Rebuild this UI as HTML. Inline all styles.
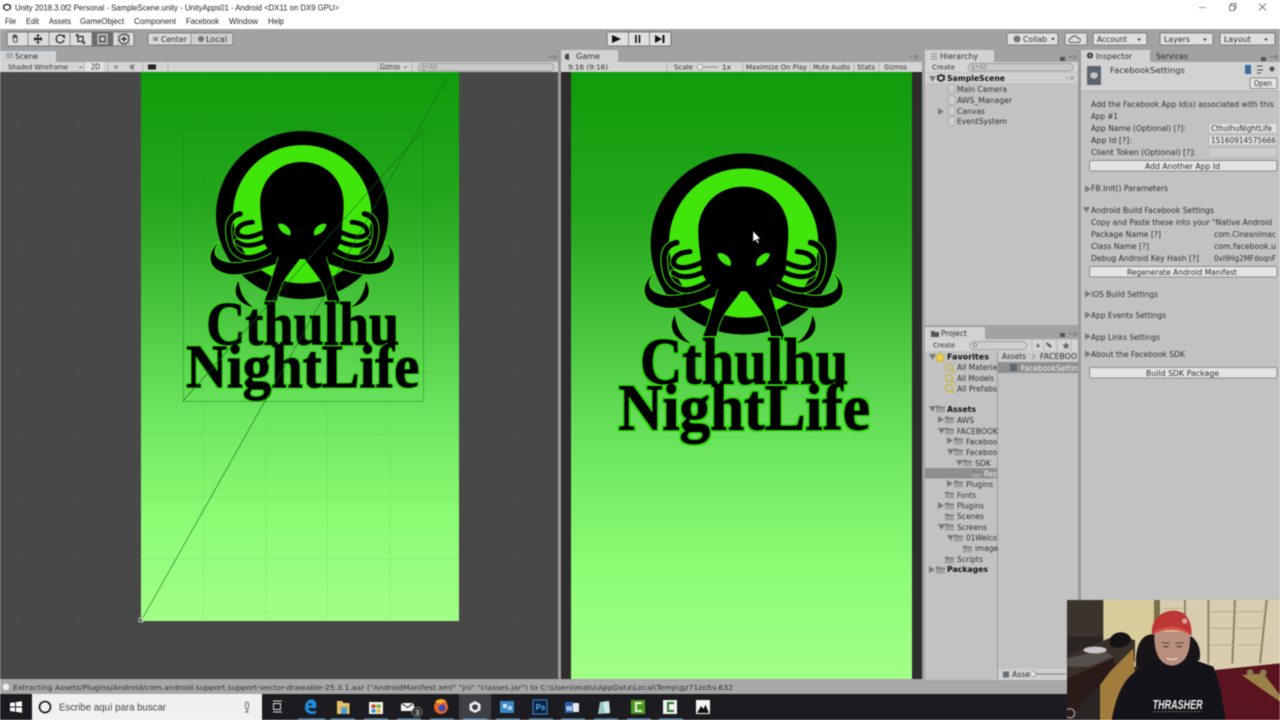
<!DOCTYPE html>
<html><head><meta charset="utf-8"><style>
html,body{margin:0;padding:0;background:#fff;width:1280px;height:720px;overflow:hidden}
#r{display:block;filter:blur(.42px)}
text{font-family:"DejaVu Sans","Liberation Sans",sans-serif;font-size:7.5px;fill:#303030}
.b{font-weight:bold;fill:#111}
.w{fill:#f2f2f2}
.m{font-family:"Liberation Sans",sans-serif;font-size:8.5px;fill:#222}
.btn{fill:#e4e4e4;stroke:#777;stroke-width:.8}
.tb{fill:#dedede;stroke:#6a6a6a;stroke-width:.8}
.arr{fill:#7a7a7a}
.lt{font-family:"Liberation Serif",serif;font-weight:bold;font-size:198px;fill:#000;stroke:#000;stroke-width:3px}
</style></head><body>
<svg id="r" width="1280" height="720" viewBox="0 0 1280 720" xmlns="http://www.w3.org/2000/svg">
<defs>
<linearGradient id="g" x1="0" y1="0" x2="0" y2="1"><stop offset="0" stop-color="#0f9c0a"/><stop offset=".25" stop-color="#27a81e"/><stop offset=".62" stop-color="#6de65f"/><stop offset=".82" stop-color="#8dfd75"/><stop offset="1" stop-color="#a2ff88"/></linearGradient>
<filter id="gl" x="-5%" y="-10%" width="110%" height="120%"><feMorphology in="SourceAlpha" operator="dilate" radius="4" result="d"/><feFlood flood-color="#2fd60c"/><feComposite in2="d" operator="in" result="o"/><feMerge><feMergeNode in="o"/><feMergeNode in="SourceGraphic"/></feMerge></filter>
<g id="half">
<path d="M135 397C98 425 92 468 128 490C170 515 228 502 280 482L350 458L335 424C292 432 250 455 210 465C170 472 130 462 120 442C113 425 122 408 135 397Z" fill="#000" stroke="#3ee60a" stroke-width="6" paint-order="stroke"/>
<path d="M200 308C165 315 158 345 165 385C170 415 180 440 220 450C250 452 285 435 310 415" fill="none" stroke="#3ee60a" stroke-width="23" stroke-linecap="round"/>
<path d="M200 308C165 315 158 345 165 385C170 415 180 440 220 450C250 452 285 435 310 415" fill="none" stroke="#000" stroke-width="17" stroke-linecap="round"/>
<path d="M240 335C205 338 190 350 190 370C205 392 245 385 300 355" fill="none" stroke="#3ee60a" stroke-width="21" stroke-linecap="round"/>
<path d="M240 335C205 338 190 350 190 370C205 392 245 385 300 355" fill="none" stroke="#000" stroke-width="15" stroke-linecap="round"/>
<path d="M190 398C215 418 250 413 305 385" fill="none" stroke="#3ee60a" stroke-width="21" stroke-linecap="round"/>
<path d="M190 398C215 418 250 413 305 385" fill="none" stroke="#000" stroke-width="15" stroke-linecap="round"/>
<path d="M325 445C312 490 300 525 292 555L276 598L316 602C322 575 325 555 338 530C352 505 375 480 394 452Z" fill="#000" stroke="#3ee60a" stroke-width="5" paint-order="stroke"/>
<path d="M195 525C172 565 192 598 242 610C215 590 200 565 195 525Z" fill="#000" stroke="#3ee60a" stroke-width="4" paint-order="stroke"/>
</g>
<g id="logo">
<ellipse cx="401" cy="312" rx="279" ry="272" fill="#000"/>
<circle cx="401" cy="309" r="224" fill="#40e60a"/>
<use href="#half"/>
<use href="#half" transform="translate(802 0) scale(-1 1)"/>
<path d="M400 140C480 140 535 200 535 275C535 325 528 350 528 385C522 425 490 448 460 452L400 454L342 452C312 448 280 425 274 385C274 350 265 325 265 275C265 200 320 140 400 140Z" fill="#000"/>
<path d="M342 342C362 352 366 368 362 378C344 376 326 362 322 342C328 338 336 339 342 342Z" fill="#3ee60a"/>
<path d="M460 342C440 352 436 368 440 378C458 376 476 362 480 342C474 338 466 339 460 342Z" fill="#3ee60a"/>
<g filter="url(#gl)">
<text class="lt" x="90" y="730" textLength="625" lengthAdjust="spacingAndGlyphs">Cthulhu</text>
<text class="lt" x="25" y="869" textLength="755" lengthAdjust="spacingAndGlyphs">NightLife</text>
</g>
</g>
<g id="fd"><path d="M0 1.500h3l1 1h5v6h-9z" fill="#7e7e7e"/><path d="M0 4h9v4.500h-9z" fill="#a0a0a0"/></g>
<g id="sh"><path d="M0 1l4-1 4 1v4c0 3-2 4.500-4 6-2-1.500-4-3-4-6z" fill="#cdcdcd" stroke="#999" stroke-width=".6"/></g>
<path id="ad" d="M0 0h7l-3.500 6z" fill="#7a7a7a"/>
<path id="ar" d="M0 0l6 3.500-6 3.500z" fill="#7a7a7a"/>
<g id="mg"><circle cx="4" cy="4" r="3.500" fill="none" stroke="#c8b73a" stroke-width="1.300"/><path d="M6.500 6.500l3 3" stroke="#c8b73a" stroke-width="1.500"/></g>
<clipPath id="cam"><rect x="1067" y="600" width="213" height="120"/></clipPath>
</defs>

<!-- title + menu -->
<rect width="1280" height="29" fill="#fff"/>
<path d="M7 3.500l4 1.500v4l-4 2-4-2v-4z" fill="#333"/><path d="M7 5l2.500 1v2.500l-2.500 1.200-2.500-1.200v-2.500z" fill="#fff"/>
<text class="m" x="15" y="10.500" textLength="324" lengthAdjust="spacingAndGlyphs">Unity 2018.3.0f2 Personal - SampleScene.unity - UnityApps01 - Android &lt;DX11 on DX9 GPU&gt;</text>
<text class="m" x="5" y="24" textLength="11" lengthAdjust="spacingAndGlyphs">File</text>
<text class="m" x="26" y="24" textLength="13" lengthAdjust="spacingAndGlyphs">Edit</text>
<text class="m" x="49" y="24" textLength="22" lengthAdjust="spacingAndGlyphs">Assets</text>
<text class="m" x="80" y="24" textLength="44" lengthAdjust="spacingAndGlyphs">GameObject</text>
<text class="m" x="134" y="24" textLength="42" lengthAdjust="spacingAndGlyphs">Component</text>
<text class="m" x="186" y="24" textLength="33" lengthAdjust="spacingAndGlyphs">Facebook</text>
<text class="m" x="229" y="24" textLength="29" lengthAdjust="spacingAndGlyphs">Window</text>
<text class="m" x="268" y="24" textLength="16" lengthAdjust="spacingAndGlyphs">Help</text>
<path d="M1199 7.500h7" stroke="#999" stroke-width="1"/>
<path d="M1229.500 5.500h5v5h-5zM1231 5.500v-2h5v5h-1.500" fill="none" stroke="#555" stroke-width=".8"/>
<path d="M1259 3.500l7 7M1266 3.500l-7 7" stroke="#555" stroke-width=".8"/>

<!-- main toolbar -->
<rect y="29" width="1280" height="651" fill="#a2a2a2"/>
<rect x="7" y="32" width="127" height="14" rx="2" fill="#dcdcdc" stroke="#5f5f5f" stroke-width=".8"/>
<rect x="92" y="32" width="21" height="14" fill="#6d6d6d"/>
<path d="M28 32v14M49 32v14M70 32v14M92 32v14M113 32v14" stroke="#6a6a6a" stroke-width=".7"/>
<path d="M13 39v-3h1v2-3h1v3-3h1v3-2h1v6h-3z" fill="none" stroke="#333" stroke-width=".8"/>
<path d="M38 34l2 2h-1.500v2h2v-1.500l2 2.500-2 2.500v-1.500h-2v2h1.500l-2 2-2-2h1.500v-2h-2v1.500l-2-2.500 2-2.500v1.500h2v-2h-1.500z" fill="#222"/>
<path d="M63 36a4 4 0 1 0 1 4" fill="none" stroke="#333" stroke-width="1.300"/><path d="M61 35h4v4z" fill="#333"/>
<rect x="78" y="36.500" width="5" height="5" fill="none" stroke="#222" stroke-width="1.200"/><path d="M76 34l3 0-3 3zM85 44l-3 0 3-3z" fill="#222"/>
<rect x="98" y="34.500" width="9" height="9" fill="none" stroke="#e8e8e8" stroke-width="1"/><rect x="101" y="37.500" width="3" height="3" fill="#ddd"/>
<circle cx="124" cy="39" r="5" fill="none" stroke="#333" stroke-width="1"/><path d="M124 36v6M121 39h6" stroke="#222" stroke-width="1.200"/><rect x="118" y="33.500" width="11" height="11" fill="none" stroke="#444" stroke-width=".6" stroke-dasharray="2 2"/>
<rect x="148" y="33" width="85" height="12" rx="2" fill="#d8d8d8" stroke="#6a6a6a" stroke-width=".8"/><rect x="191" y="33" width="42" height="12" fill="#cdcdcd" stroke="#6a6a6a" stroke-width=".6"/>
<path d="M153 38h5M153 40h5" stroke="#555"/>
<circle cx="201" cy="39" r="3" fill="#777"/>
<text x="161" y="42" textLength="26" lengthAdjust="spacingAndGlyphs">Center</text>
<text x="206" y="42" textLength="21" lengthAdjust="spacingAndGlyphs">Local</text>
<rect x="607" y="32" width="64" height="14" rx="2" fill="#e0e0e0" stroke="#5f5f5f" stroke-width=".8"/>
<path d="M628.500 32v14M649.500 32v14" stroke="#6a6a6a" stroke-width=".7"/>
<path d="M612 35l9 4-9 4z" fill="#111"/>
<path d="M635 35h1.800v8H635zM638.500 35h1.800v8h-1.800z" fill="#222"/>
<path d="M655 35l7 4-7 4zM662.500 35h2v8h-2z" fill="#111"/>
<rect x="1007" y="33" width="51" height="12" rx="2" class="tb"/>
<circle cx="1017" cy="39" r="3.500" fill="#777"/>
<text x="1023" y="42" textLength="24" lengthAdjust="spacingAndGlyphs">Collab</text><path d="M1051 38h4l-2 2.500z" fill="#444"/>
<rect x="1065" y="33" width="22" height="12" rx="2" class="tb"/>
<path d="M1071 42.500a2 2 0 0 1 0-4 3.500 3.500 0 0 1 6.500-.500 2.300 2.300 0 0 1 1 4.500z" fill="none" stroke="#333" stroke-width=".8"/>
<rect x="1093" y="33" width="54" height="12" rx="2" class="tb"/>
<text x="1097" y="42" textLength="30" lengthAdjust="spacingAndGlyphs">Account</text><path d="M1137 38.500h4l-2 2.500z" fill="#444"/>
<rect x="1160" y="33" width="53" height="12" rx="2" class="tb"/>
<text x="1164" y="42" textLength="26" lengthAdjust="spacingAndGlyphs">Layers</text><path d="M1203 38.500h4l-2 2.500z" fill="#444"/>
<rect x="1220" y="33" width="55" height="12" rx="2" class="tb"/>
<text x="1224" y="42" textLength="27" lengthAdjust="spacingAndGlyphs">Layout</text><path d="M1264 38.500h4l-2 2.500z" fill="#444"/>

<!-- Scene -->
<rect x="0" y="50" width="56" height="13" fill="#d2d2d2"/><rect x="0" y="50" width="56" height="1" fill="#7fa0cc"/>
<path d="M6 53.500h7M6 55.500h7M6 57.500h7" stroke="#777" stroke-width=".8"/>
<text x="15" y="59" textLength="23" lengthAdjust="spacingAndGlyphs">Scene</text>
<path d="M549 57h3M553 56h4M553 58h4" stroke="#666" stroke-width=".8"/>
<rect x="0" y="62" width="558" height="10" fill="#d4d4d4"/>
<text x="8" y="69.500" textLength="60" lengthAdjust="spacingAndGlyphs" style="font-size:7px">Shaded Wireframe</text>
<path d="M79 66.500h3l-1.500 2z" fill="#666"/><path d="M84 62v10M104 62v10M108 62v10M143 62v10M168 62v10M378 62v10M412 62v10" stroke="#aaa" stroke-width=".7"/>
<rect x="85" y="62" width="19" height="10" fill="#e2e2e2"/>
<text x="91" y="69.500" textLength="9" lengthAdjust="spacingAndGlyphs">2D</text>
<circle cx="116" cy="67" r="2" fill="#999"/><path d="M130 65h2l2-1.500v7l-2-1.500h-2z" fill="#888"/><rect x="148" y="64.500" width="8" height="5" fill="#222"/>
<text x="380" y="69.500" textLength="20" lengthAdjust="spacingAndGlyphs">Gizmos</text><path d="M404 66.500h3l-1.500 2z" fill="#666"/>
<rect x="418" y="63.500" width="136" height="7.500" rx="3.700" fill="#c9c9c9" stroke="#8d8d8d" stroke-width=".7"/>
<text x="421" y="69.500" style="fill:#888" textLength="16" lengthAdjust="spacingAndGlyphs">q•All</text>
<rect x="0" y="72" width="558" height="607" fill="#484848"/>
<path d="M17 72V679M79 72V679M141 72V679M203 72V679M266 72V679M327 72V679M390 72V679M452 72V679M514 72V679M0 124H558M0 186H558M0 248H558M0 310H558M0 372H558M0 434H558M0 497H558M0 559H558M0 621H558" stroke="#505050" stroke-width=".7"/>
<rect x="141" y="72" width="318" height="549" fill="url(#g)"/>
<path d="M203 72V621M266 72V621M327 72V621M390 72V621M141 124H459M141 186H459M141 248H459M141 310H459M141 372H459M141 434H459M141 497H459M141 559H459" stroke="#2a7a20" stroke-width=".6" opacity=".16"/>
<use href="#logo" transform="translate(178.300 118.700) scale(.309)"/>
<rect x="183.500" y="129.500" width="240" height="272" fill="none" stroke="#1d7f18" stroke-width=".7" opacity=".7"/>
<path d="M141 621L450 73M183 401L423 130" stroke="#14691a" stroke-width=".6" fill="none"/>
<rect x="139" y="618" width="4" height="4" fill="none" stroke="#ddd" stroke-width=".7"/>

<!-- Game -->
<rect x="558" y="50" width="3" height="630" fill="#9a9a9a"/>
<rect x="561" y="50" width="57" height="13" fill="#d2d2d2"/>
<path d="M569 54a3 3 0 1 0 0 5.500z" fill="#444"/>
<text x="576" y="59" textLength="24" lengthAdjust="spacingAndGlyphs">Game</text>
<path d="M910 57h3M914 56h4M914 58h4" stroke="#666" stroke-width=".8"/>
<rect x="561" y="62" width="361" height="10" fill="#d4d4d4"/>
<text x="568" y="69.500" textLength="40" lengthAdjust="spacingAndGlyphs" style="font-size:7px">9:16 (9:16)</text>
<path d="M667 62v10M743 62v10M810 62v10M854 62v10M879 62v10" stroke="#aaa" stroke-width=".7"/>
<text x="674" y="69.500" textLength="19" lengthAdjust="spacingAndGlyphs" style="font-size:7px">Scale</text>
<path d="M697 67h21" stroke="#888" stroke-width="1"/><circle cx="700" cy="67" r="3" fill="#e4e4e4" stroke="#888" stroke-width=".6"/>
<text x="722" y="69.500" textLength="9" lengthAdjust="spacingAndGlyphs" style="font-size:7px">1x</text>
<text x="746" y="69.500" textLength="61" lengthAdjust="spacingAndGlyphs" style="font-size:7px">Maximize On Play</text>
<text x="813" y="69.500" textLength="37" lengthAdjust="spacingAndGlyphs" style="font-size:7px">Mute Audio</text>
<text x="857" y="69.500" textLength="18" lengthAdjust="spacingAndGlyphs" style="font-size:7px">Stats</text>
<text x="884" y="69.500" textLength="23" lengthAdjust="spacingAndGlyphs" style="font-size:7px">Gizmos</text>
<rect x="561" y="72" width="361" height="607" fill="#2e2c2e"/>
<rect x="571" y="72" width="341" height="607" fill="url(#g)"/>
<use href="#logo" transform="translate(610 140) scale(.3333)"/>
<path d="M753 231l0 11 2.500-2.500 2 4 1.500-.800-2-3.700h3.500z" fill="#fff" stroke="#222" stroke-width=".5"/>

<!-- Hierarchy -->
<rect x="925" y="62" width="153" height="263" fill="#c2c2c2"/>
<rect x="925" y="50" width="69" height="13" fill="#d2d2d2"/>
<path d="M931 54h6M931 56.500h6M931 59h6" stroke="#777" stroke-width=".7"/>
<text x="940" y="59" textLength="38" lengthAdjust="spacingAndGlyphs">Hierarchy</text>
<path d="M1060 57h5v4h-5z" fill="#555"/><path d="M1069 57h3M1073 56h4M1073 58h4" stroke="#666" stroke-width=".8"/>
<rect x="925" y="62" width="153" height="10" fill="#d4d4d4"/>
<text x="932" y="69.500" textLength="23" lengthAdjust="spacingAndGlyphs" style="font-size:7px">Create</text>
<rect x="968" y="63.500" width="105" height="7.500" rx="3.700" fill="#c9c9c9" stroke="#8d8d8d" stroke-width=".7"/>
<text x="971" y="69.500" style="fill:#888" textLength="16" lengthAdjust="spacingAndGlyphs">q•All</text>
<rect x="925" y="73" width="153" height="10" fill="#d0d0d0"/>
<use href="#ad" transform="translate(929 76)"/>
<path d="M941 74l4 1.500v4.500l-4 2-4-2v-4.500z" fill="#333"/><path d="M941 76l2 1v2l-2 1-2-1v-2z" fill="#d0d0d0"/>
<text class="b" x="947" y="81" textLength="58" lengthAdjust="spacingAndGlyphs">SampleScene</text>
<path d="M1066 78h2M1070 77h4M1070 79h4" stroke="#777" stroke-width=".8"/>
<use href="#sh" transform="translate(948 84.500) scale(.9)"/><use href="#sh" transform="translate(948 95.500) scale(.9)"/><use href="#sh" transform="translate(948 106) scale(.9)"/><use href="#sh" transform="translate(948 116.500) scale(.9)"/>
<use href="#ar" transform="translate(938 108)"/>
<text x="957" y="92" textLength="50" lengthAdjust="spacingAndGlyphs">Main Camera</text>
<text x="957" y="103" textLength="55" lengthAdjust="spacingAndGlyphs">AWS_Manager</text>
<text x="957" y="114" textLength="28" lengthAdjust="spacingAndGlyphs">Canvas</text>
<text x="957" y="124" textLength="50" lengthAdjust="spacingAndGlyphs">EventSystem</text>

<!-- Project -->
<rect x="925" y="339" width="153" height="341" fill="#c2c2c2"/>
<rect x="925" y="327" width="60" height="13" fill="#d2d2d2"/>
<path d="M931 331h3l1 1h4v5h-8z" fill="#555"/>
<text x="941" y="336" textLength="26" lengthAdjust="spacingAndGlyphs">Project</text>
<path d="M1060 333h5v4h-5z" fill="#555"/><path d="M1069 334h3M1073 333h4M1073 335h4" stroke="#666" stroke-width=".8"/>
<rect x="925" y="340" width="153" height="11" fill="#d4d4d4"/>
<text x="933" y="347.500" textLength="22" lengthAdjust="spacingAndGlyphs" style="font-size:7px">Create</text>
<rect x="970" y="341.500" width="57" height="8" rx="4" fill="#cfcfcf" stroke="#8d8d8d" stroke-width=".7"/>
<circle cx="975" cy="345" r="1.800" fill="none" stroke="#666" stroke-width=".7"/>
<path d="M1032 340v11M1044 340v11M1057 340v11M1071 340v11" stroke="#aaa" stroke-width=".7"/>
<path d="M1036 347l2-4 2 4zM1047 342l5 4-2 2-4-4zM1066 342l1.200 2.500 2.500.300-2 1.700.700 2.500-2.400-1.300-2.400 1.300.700-2.500-2-1.700 2.500-.300z" fill="#666"/>
<rect x="997" y="351" width="1" height="329" fill="#9a9a9a"/>
<use href="#ad" transform="translate(929 354)"/>
<path d="M940 352l1.800 3.500 3.700.500-2.700 2.600.700 3.900-3.500-1.800-3.500 1.800.700-3.900-2.700-2.600 3.700-.500z" fill="#f0d040" stroke="#a08a20" stroke-width=".4"/>
<text class="b" x="947" y="359.500" textLength="42" lengthAdjust="spacingAndGlyphs">Favorites</text>
<use href="#mg" transform="translate(945 363)"/><use href="#mg" transform="translate(945 374)"/><use href="#mg" transform="translate(945 384)"/>
<text x="957" y="370" textLength="40" lengthAdjust="spacingAndGlyphs">All Materia</text>
<text x="957" y="381" textLength="37" lengthAdjust="spacingAndGlyphs">All Models</text>
<text x="957" y="391.500" textLength="40" lengthAdjust="spacingAndGlyphs">All Prefabs</text>
<use href="#ad" transform="translate(929 406)"/><use href="#fd" transform="translate(936 404)"/>
<text class="b" x="947" y="412" textLength="29" lengthAdjust="spacingAndGlyphs">Assets</text>
<use href="#ar" transform="translate(938 416)"/><use href="#fd" transform="translate(945 415)"/>
<text x="957" y="423" textLength="17" lengthAdjust="spacingAndGlyphs">AWS</text>
<use href="#ad" transform="translate(938 428)"/><use href="#fd" transform="translate(945 426)"/>
<text x="957" y="434" textLength="41" lengthAdjust="spacingAndGlyphs">FACEBOOK</text>
<use href="#ar" transform="translate(947 437)"/><use href="#fd" transform="translate(954 436)"/>
<text x="966" y="444.500" textLength="31" lengthAdjust="spacingAndGlyphs">Faceboo</text>
<use href="#ad" transform="translate(947 449)"/><use href="#fd" transform="translate(954 447)"/>
<text x="966" y="455" textLength="31" lengthAdjust="spacingAndGlyphs">Faceboo</text>
<use href="#ad" transform="translate(956 460)"/><use href="#fd" transform="translate(963 458)"/>
<text x="975" y="466" textLength="16" lengthAdjust="spacingAndGlyphs">SDK</text>
<rect x="925" y="468" width="72" height="10.500" fill="#8f8f8f"/>
<use href="#fd" transform="translate(972 469)"/>
<text class="w" x="984" y="476.500" textLength="13" lengthAdjust="spacingAndGlyphs">Res</text>
<use href="#ar" transform="translate(947 480)"/><use href="#fd" transform="translate(954 479)"/>
<text x="966" y="487" textLength="27" lengthAdjust="spacingAndGlyphs">Plugins</text>
<use href="#fd" transform="translate(945 490)"/>
<text x="957" y="498" textLength="19" lengthAdjust="spacingAndGlyphs">Fonts</text>
<use href="#ar" transform="translate(938 502)"/><use href="#fd" transform="translate(945 501)"/>
<text x="957" y="508.500" textLength="27" lengthAdjust="spacingAndGlyphs">Plugins</text>
<use href="#fd" transform="translate(945 512)"/>
<text x="957" y="519" textLength="27" lengthAdjust="spacingAndGlyphs">Scenes</text>
<use href="#ad" transform="translate(938 524)"/><use href="#fd" transform="translate(945 522)"/>
<text x="957" y="530" textLength="30" lengthAdjust="spacingAndGlyphs">Screens</text>
<use href="#ad" transform="translate(947 535)"/><use href="#fd" transform="translate(954 533)"/>
<text x="966" y="540.500" textLength="31" lengthAdjust="spacingAndGlyphs">01Welco</text>
<use href="#fd" transform="translate(963 544)"/>
<text x="975" y="551" textLength="23" lengthAdjust="spacingAndGlyphs">image</text>
<use href="#fd" transform="translate(945 555)"/>
<text x="957" y="562" textLength="26" lengthAdjust="spacingAndGlyphs">Scripts</text>
<use href="#ar" transform="translate(929 566)"/><use href="#fd" transform="translate(936 565)"/>
<text class="b" x="947" y="572" textLength="41" lengthAdjust="spacingAndGlyphs">Packages</text>
<rect x="998" y="351" width="80" height="11" fill="#cacaca"/>
<text x="1002" y="359" textLength="24" lengthAdjust="spacingAndGlyphs">Assets</text>
<path d="M1032 354l3 2.500-3 2.500" fill="none" stroke="#777" stroke-width=".7"/>
<text x="1040" y="359" textLength="37" lengthAdjust="spacingAndGlyphs">FACEBOO</text>
<rect x="998" y="362" width="80" height="11" fill="#8f8f8f"/>
<rect x="1010" y="364" width="7" height="7" fill="#5a6670"/>
<text class="w" x="1021" y="371" textLength="57" lengthAdjust="spacingAndGlyphs">FacebookSettin</text>
<rect x="998" y="669" width="80" height="11" fill="#d0d0d0"/>
<rect x="1003" y="671.500" width="6" height="6" fill="#667078"/>
<text x="1012" y="677" textLength="18" lengthAdjust="spacingAndGlyphs">Asse</text>
<path d="M1032 674h34" stroke="#888" stroke-width="1.200"/><circle cx="1033" cy="674" r="2.800" fill="#e4e4e4" stroke="#888" stroke-width=".6"/>

<!-- Inspector -->
<rect x="1081" y="50" width="199" height="630" fill="#c2c2c2"/>
<rect x="1078" y="50" width="3" height="630" fill="#9a9a9a"/>
<rect x="1081" y="50" width="69" height="12" fill="#d2d2d2"/><rect x="1150" y="50" width="130" height="12" fill="#a2a2a2"/>
<circle cx="1090" cy="55.500" r="3" fill="#333"/><path d="M1090 54v3" stroke="#fff"/>
<text x="1096" y="59" textLength="36" lengthAdjust="spacingAndGlyphs">Inspector</text>
<text x="1156" y="59" textLength="32" lengthAdjust="spacingAndGlyphs">Services</text>
<path d="M1261 57h5v4h-5z" fill="#555"/><path d="M1270 57h3M1274 56h4M1274 58h4" stroke="#666" stroke-width=".8"/>
<rect x="1081" y="62" width="199" height="29" fill="#d2d2d2"/>
<rect x="1087" y="66" width="14" height="19" rx="1" fill="#5c6670"/>
<path d="M1094 72l3.500 1.500v3.500l-3.500 2-3.500-2v-3.500z" fill="#c8c8c8"/>
<text x="1110" y="73" textLength="75" lengthAdjust="spacingAndGlyphs" style="font-size:8px">FacebookSettings</text>
<rect x="1245" y="65" width="6" height="9" fill="#3a6a9a"/><path d="M1257 66h5M1257 70h6M1257 73h4" stroke="#444"/><circle cx="1272" cy="69" r="2.500" fill="#555"/>
<rect x="1250" y="78" width="27" height="10.500" rx="1.500" class="btn"/>
<text x="1254" y="86" textLength="18" lengthAdjust="spacingAndGlyphs">Open</text>
<path d="M1081 91h199" stroke="#999" stroke-width=".6"/>

<text x="1091" y="107" textLength="183" lengthAdjust="spacingAndGlyphs">Add the Facebook App Id(s) associated with this</text>
<text x="1091" y="119" textLength="27" lengthAdjust="spacingAndGlyphs">App #1</text>
<text x="1091" y="131" textLength="95" lengthAdjust="spacingAndGlyphs">App Name (Optional) [?]:</text>
<rect x="1209" y="123.500" width="68" height="9.500" fill="#e0e0e0" stroke="#aaa" stroke-width=".5"/>
<text x="1211" y="131" textLength="61" lengthAdjust="spacingAndGlyphs">CthulhuNightLife</text>
<text x="1091" y="143" textLength="41" lengthAdjust="spacingAndGlyphs">App Id [?]:</text>
<rect x="1209" y="135.500" width="68" height="9.500" fill="#e0e0e0" stroke="#aaa" stroke-width=".5"/>
<text x="1211" y="143" textLength="65" lengthAdjust="spacingAndGlyphs">15160914575666</text>
<text x="1091" y="155" textLength="105" lengthAdjust="spacingAndGlyphs">Client Token (Optional) [?]:</text>
<rect x="1209" y="147.500" width="68" height="9.500" fill="#cdcdcd" stroke="#aaa" stroke-width=".5"/>
<rect x="1089.500" y="160.500" width="187.500" height="10.500" rx="2" class="btn"/>
<text x="1145" y="169" textLength="75" lengthAdjust="spacingAndGlyphs">Add Another App Id</text>
<use href="#ar" transform="translate(1085 185.500)"/>
<text x="1091" y="191" textLength="77" lengthAdjust="spacingAndGlyphs">FB.Init() Parameters</text>
<use href="#ad" transform="translate(1083 207)"/>
<text x="1091" y="213" textLength="123" lengthAdjust="spacingAndGlyphs">Android Build Facebook Settings</text>
<text x="1091" y="225" textLength="181" lengthAdjust="spacingAndGlyphs">Copy and Paste these into your "Native Android</text>
<text x="1091" y="237" textLength="70" lengthAdjust="spacingAndGlyphs">Package Name [?]</text>
<text x="1214" y="237" textLength="62" lengthAdjust="spacingAndGlyphs">com.Cineanimac</text>
<text x="1091" y="249" textLength="58" lengthAdjust="spacingAndGlyphs">Class Name [?]</text>
<text x="1214" y="249" textLength="62" lengthAdjust="spacingAndGlyphs">com.facebook.u</text>
<text x="1091" y="261" textLength="108" lengthAdjust="spacingAndGlyphs">Debug Android Key Hash [?]</text>
<text x="1214" y="261" textLength="62" lengthAdjust="spacingAndGlyphs">0vi9Hg2MFdoqnF</text>
<rect x="1089.500" y="266.500" width="187.500" height="10.500" rx="2" class="btn"/>
<text x="1127" y="275" textLength="110" lengthAdjust="spacingAndGlyphs">Regenerate Android Manifest</text>
<use href="#ar" transform="translate(1085 290.500)"/>
<text x="1091" y="297" textLength="67" lengthAdjust="spacingAndGlyphs">iOS Build Settings</text>
<use href="#ar" transform="translate(1085 311.500)"/>
<text x="1091" y="318" textLength="75" lengthAdjust="spacingAndGlyphs">App Events Settings</text>
<use href="#ar" transform="translate(1085 333)"/>
<text x="1091" y="340" textLength="69" lengthAdjust="spacingAndGlyphs">App Links Settings</text>
<use href="#ar" transform="translate(1085 350.500)"/>
<text x="1091" y="357" textLength="94" lengthAdjust="spacingAndGlyphs">About the Facebook SDK</text>
<rect x="1089.500" y="367.500" width="187.500" height="10.500" rx="2" class="btn"/>
<text x="1146" y="376" textLength="73" lengthAdjust="spacingAndGlyphs">Build SDK Package</text>

<!-- status -->
<rect y="680" width="1280" height="14" fill="#a8a8a8"/>
<circle cx="6" cy="687" r="3.800" fill="#eee" stroke="#777" stroke-width=".5"/>
<text x="13" y="690" textLength="720" lengthAdjust="spacingAndGlyphs" style="font-size:7px">Extracting Assets/Plugins/Android/com.android.support.support-vector-drawable-25.3.1.aar ("AndroidManifest.xml" "jni" "classes.jar") to C:\Users\matu\AppData\Local\Temp\gz71zo5v.632</text>

<!-- taskbar -->
<rect y="694" width="1280" height="26" fill="#1c1c20"/>
<path d="M10 703l5-.700v4.200h-5zM16 702.100l6-.900v5.300h-6zM10 707.500h5v4.200l-5-.700zM16 707.500h6v5.300l-6-.900z" fill="#fff"/>
<rect x="32" y="694" width="230" height="26" fill="#f0f0f0"/>
<circle cx="45" cy="707" r="5.500" fill="none" stroke="#111" stroke-width="1.600"/>
<text x="59" y="710.500" textLength="107" lengthAdjust="spacingAndGlyphs" style="font-family:'Liberation Sans',sans-serif;font-size:10px;fill:#444">Escribe aquí para buscar</text>
<rect x="245.500" y="702" width="3" height="7" rx="1.500" fill="none" stroke="#555" stroke-width=".8"/><path d="M247 709v3M245 712h4" stroke="#555" stroke-width=".8"/>
<path d="M273 701h9M273 712h9" stroke="#ddd"/><rect x="273.500" y="703.500" width="7" height="6" fill="none" stroke="#ddd"/>
<path d="M316 708h-8c.500 3 4.500 4.500 8 2.500v2.800c-5 2-11 0-11-5.800 0-5 3-8 6.500-8 4 0 5.500 3.500 4.500 8.500zM308 705.500h4c0-3-3.500-3-4 0z" fill="#1e8fe0"/>
<path d="M337 701h5l1.500 2h6v11h-12.500z" fill="#e8c060"/><rect x="341" y="707" width="6" height="7" fill="#4aa0d8"/>
<rect x="369" y="702" width="14" height="12" fill="#f0f0f0"/><rect x="371.500" y="704.500" width="4" height="3.500" fill="#e2402a"/><rect x="376.500" y="704.500" width="4" height="3.500" fill="#6cb52c"/><rect x="371.500" y="709" width="4" height="3.500" fill="#2a90d8"/><rect x="376.500" y="709" width="4" height="3.500" fill="#f0b820"/>
<path d="M401 703h13v8h-13z" fill="#f4f4f4"/><path d="M401 703l6.500 4.500 6.500-4.500" fill="none" stroke="#222" stroke-width="1"/>
<circle cx="417" cy="712" r="5" fill="#333" stroke="#999" stroke-width=".6"/><text x="415" y="715" style="font-size:7px;fill:#fff">3</text>
<circle cx="441" cy="707" r="7" fill="#e8632a"/><circle cx="442" cy="708" r="3.500" fill="#3a4ec0"/><path d="M435 702c3-4 9-4 12 0-3-1-5 0-6 2z" fill="#f5b02a"/>
<rect x="459" y="694" width="32" height="26" fill="#3f3f46"/>
<path d="M475 701l5.500 3v6l-5.500 3-5.500-3v-6z" fill="#eee"/><path d="M475 704l2.800 1.600v3l-2.800 1.600-2.800-1.600v-3z" fill="#3f3f46"/>
<rect x="500" y="701" width="14" height="12" fill="#3a88c4"/><rect x="503" y="704" width="4" height="4" fill="#cfe4f4"/><rect x="508" y="706" width="4" height="4" fill="#b0d0ea"/>
<rect x="533" y="700" width="14" height="14" fill="#0b2240" stroke="#3a8cd8" stroke-width="1"/><text x="535.500" y="710" style="font-family:'Liberation Sans',sans-serif;font-size:8px;fill:#5ab0f0;font-weight:bold">Ps</text>
<rect x="565" y="702" width="8" height="11" fill="#2a5ea8"/><rect x="573" y="703" width="6" height="9" fill="#e4eaf4"/><text x="566" y="711" style="font-family:'Liberation Sans',sans-serif;font-size:7px;fill:#fff;font-weight:bold">W</text>
<path d="M600 702l9-1 1 12-12 1z" fill="#9ac8c8"/><path d="M603 702l6-1 1 12-5 .500z" fill="#d0e8e8"/>
<rect x="631" y="700" width="14" height="14" fill="#4c9a20"/><path d="M642 703h-6v8h6" fill="none" stroke="#e8f4d8" stroke-width="2"/>
<rect x="663" y="700" width="14" height="14" fill="#f2f2f2"/><path d="M674 703h-6v8h6" fill="none" stroke="#2a7a2a" stroke-width="2"/>
<rect x="696" y="700" width="14" height="14" fill="#f6f6f6"/><path d="M697 713l4-7 2.500 3 2-4.500 3.500 8.500z" fill="#111"/>
<path d="M298 719h27M331 719h24M364 719h24M397 719h24M430 719h24M463 719h24M496 719h24M529 719h24M561 719h24M594 719h24M627 719h24M659 719h24" stroke="#6fa8d8" stroke-width="1"/>

<!-- webcam -->
<g clip-path="url(#cam)">
<g transform="translate(1060 595) scale(.33333)">
<rect x="0" y="0" width="660" height="375" fill="#2a2522"/>
<rect x="20" y="15" width="115" height="110" fill="#3a342c"/>
<rect x="130" y="15" width="155" height="200" fill="#d8cc9a"/>
<rect x="282" y="15" width="22" height="130" fill="#7a7048"/>
<rect x="300" y="15" width="360" height="220" fill="#d9cdb0"/>
<path d="M375 15v190M445 15v190M525 15l-8 190M620 15l-20 190" stroke="#8d8260" stroke-width="6"/>
<path d="M310 40H375M310 80H375M450 50H520M450 100H520M450 150H520M530 50H615M530 100H610M530 150H605" stroke="#b8ac88" stroke-width="3"/>
<path d="M465 225L660 205V375H480Z" fill="#5a1420"/>
<path d="M545 240L610 235L660 300V320Z" fill="#9a8348"/>
<circle cx="570" cy="233" r="10" fill="#8c7c50"/><circle cx="610" cy="233" r="10" fill="#8c7c50"/>
<path d="M22 180L160 125L225 135V200L150 250L22 250Z" fill="#3a302a"/>
<path d="M120 260L220 160L225 240L190 280L180 375H120Z" fill="#a27c3c"/>
<path d="M22 250L160 190L165 210L120 270L22 375Z" fill="#2a1a18"/>
<path d="M22 190L130 165L160 185L90 215L22 215Z" fill="#55504c"/>
<ellipse cx="105" cy="165" rx="35" ry="10" fill="#c8c4c8"/>
<path d="M150 130C165 105 205 105 215 135C200 160 165 165 150 150Z" fill="#141414"/>
<path d="M228 215C225 150 245 120 275 118L395 125C415 140 425 170 418 195L340 230Z" fill="#181418"/>
<path d="M155 375C170 300 190 235 265 210L300 190L375 185L460 215C480 260 490 330 497 375Z" fill="#15131a"/>
<path d="M284 110C280 150 288 208 335 212C378 208 394 170 390 110Z" fill="#b88e7c"/>
<path d="M305 143l24 2M347 145l24-2" stroke="#5a4238" stroke-width="3"/>
<path d="M310 155h16M350 155h16" stroke="#3a2a25" stroke-width="3"/>
<path d="M320 190q16 7 32 0" stroke="#e8d8d0" stroke-width="4" fill="none"/>
<path d="M276 120C270 70 310 45 345 47C378 50 396 75 395 122C350 88 310 92 276 120Z" fill="#bd3636"/>
<path d="M276 120C300 88 365 85 395 122C360 100 310 100 276 120Z" fill="#d8564a"/>
<circle cx="374" cy="78" r="8" fill="#d8a0a0"/>
<text x="278" y="342" textLength="150" lengthAdjust="spacingAndGlyphs" style="font-family:'Liberation Sans',sans-serif;font-size:38px;font-weight:bold;font-style:italic;fill:#eee">THRASHER</text>
<path d="M280 350H425" stroke="#888" stroke-width="2" stroke-dasharray="8 3"/>
<circle cx="30" cy="355" r="14" fill="none" stroke="#bbb" stroke-width="3"/>
</g>
</g>
</svg>
</body></html>
